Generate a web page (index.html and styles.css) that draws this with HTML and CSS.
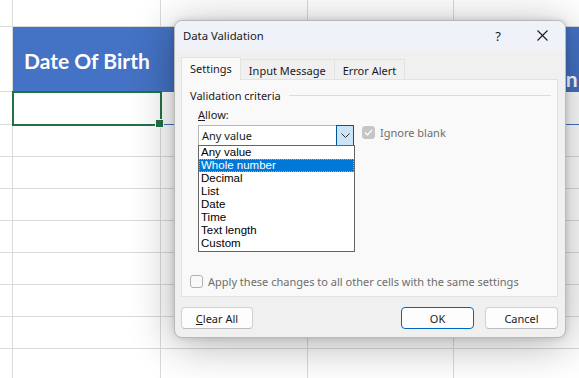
FILE: index.html
```html
<!DOCTYPE html>
<html lang="en">
<head>
  <meta charset="UTF-8" />
  <title>Data Validation</title>
  <link rel="stylesheet" href="styles.css">
</head>
<body>
  <!-- worksheet behind the dialog -->
  <div class="sheet">
    <div class="cell"></div><div class="cell"></div><div class="cell"></div><div class="cell"></div><div class="cell"></div>

    <div class="cell"></div>
    <div class="cell head">Date Of Birth</div>
    <div class="cell head"></div>
    <div class="cell head"></div>
    <div class="cell head end">Designation</div>

    <div class="cell"></div>
    <div class="cell sel"></div>
    <div class="cell band"></div><div class="cell band"></div><div class="cell band"></div>

    <div class="cell"></div><div class="cell"></div><div class="cell"></div><div class="cell"></div><div class="cell"></div>
    <div class="cell"></div><div class="cell"></div><div class="cell"></div><div class="cell"></div><div class="cell"></div>
    <div class="cell"></div><div class="cell"></div><div class="cell"></div><div class="cell"></div><div class="cell"></div>
    <div class="cell"></div><div class="cell"></div><div class="cell"></div><div class="cell"></div><div class="cell"></div>
    <div class="cell"></div><div class="cell"></div><div class="cell"></div><div class="cell"></div><div class="cell"></div>
    <div class="cell"></div><div class="cell"></div><div class="cell"></div><div class="cell"></div><div class="cell"></div>
    <div class="cell"></div><div class="cell"></div><div class="cell"></div><div class="cell"></div><div class="cell"></div>
    <div class="cell"></div><div class="cell"></div><div class="cell"></div><div class="cell"></div><div class="cell"></div>
  </div>

  <div class="dialog">
    <div class="titlebar">
      <span class="title">Data Validation</span>
      <span class="help">?</span>
      <svg class="close" width="11" height="11" viewBox="0 0 11 11">
        <path d="M0.5 0.5 L10.5 10.5 M10.5 0.5 L0.5 10.5" stroke="#1a1a1a" stroke-width="1.1" fill="none"/>
      </svg>
    </div>

    <div class="body">
      <div class="tabs">
        <div class="tab active">Settings</div>
        <div class="tab">Input Message</div>
        <div class="tab">Error Alert</div>
      </div>

      <div class="panel">
        <div class="group-label">
          <span>Validation criteria</span>
          <span class="rule"></span>
        </div>

        <div class="allow">
          <div class="field-label"><u>A</u>llow:</div>
          <div class="allow-row">
            <div class="combo-wrap">
              <div class="combo">
                <span class="combo-text">Any value</span>
                <span class="combo-btn">
                  <svg width="9" height="6" viewBox="0 0 9 6">
                    <path d="M0.5 0.5 L4.5 4.5 L8.5 0.5" stroke="#333" stroke-width="1" fill="none"/>
                  </svg>
                </span>
              </div>
              <ul class="droplist">
                <li>Any value</li>
                <li class="picked">Whole number</li>
                <li>Decimal</li>
                <li>List</li>
                <li>Date</li>
                <li>Time</li>
                <li>Text length</li>
                <li>Custom</li>
              </ul>
            </div>
            <label class="check disabled">
              <span class="box on">
                <svg width="9" height="7" viewBox="0 0 9 7">
                  <path d="M1 3.5 L3.5 6 L8 1" stroke="#fff" stroke-width="1.2" fill="none"/>
                </svg>
              </span>
              Ignore blank
            </label>
          </div>
        </div>

        <label class="check disabled apply">
          <span class="box"></span>
          Apply these changes to all other cells with the same settings
        </label>
      </div>

      <div class="buttons">
        <button class="btn"><u>C</u>lear All</button>
        <span class="spacer"></span>
        <button class="btn primary">OK</button>
        <button class="btn">Cancel</button>
      </div>
    </div>
  </div>
</body>
</html>
```
FILE: styles.css
```css
* {
  margin: 0;
  padding: 0;
  box-sizing: border-box;
}

body {
  width: 579px;
  height: 378px;
  overflow: hidden;
  background: #fff;
  position: relative;
  font-family: 'Noto Sans', 'Open Sans', sans-serif;
}

/* worksheet */
.sheet {
  display: grid;
  grid-template-columns: 13px 148px 147px 146px 1fr;
  grid-template-rows: 27px 65px 33px repeat(8, 32px);
}

.cell {
  border-right: 1px solid #dadada;
  border-bottom: 1px solid #dadada;
}

.cell.head {
  background: #4472c4;
  border-color: #4472c4;
  color: #fff;
  font-family: Lato, 'Open Sans', sans-serif;
  font-weight: 700;
  font-size: 21px;
  display: flex;
  align-items: center;
  padding-left: 11px;
  padding-top: 2px;
}

.cell.head.end {
  justify-content: flex-end;
  align-items: flex-end;
  padding-right: 9px;
  padding-bottom: 0;
}

.cell.band {
  border-bottom-color: #4472c4;
}

.cell.sel {
  position: relative;
  outline: 2px solid #217346;
  outline-offset: -1px;
}

.cell.sel::after {
  content: '';
  position: absolute;
  right: -4px;
  bottom: -4px;
  width: 7px;
  height: 7px;
  background: #217346;
  border: 1px solid #fff;
}

/* dialog */
.dialog {
  position: absolute;
  left: 174px;
  top: 20px;
  width: 392px;
  height: 318px;
  background: #f0f0f0;
  border: 1px solid #b9b9b9;
  border-radius: 8px;
  overflow: hidden;
  box-shadow: 0 6px 44px rgba(0, 0, 0, 0.32), 0 0 6px rgba(0, 0, 0, 0.14);
  font-size: 11px;
  color: #1a1a1a;
  display: flex;
  flex-direction: column;
}

.titlebar {
  height: 30px;
  background: #eff2f9;
  display: flex;
  align-items: center;
  padding-left: 8px;
  padding-right: 17px;
}

.title {
  flex: 1;
  font-size: 11.3px;
}

.help {
  font-size: 13px;
  margin-right: 36px;
}

.close {
  display: block;
}

.body {
  flex: 1;
  padding: 7px 7px 8px 6px;
  display: flex;
  flex-direction: column;
}

.tabs {
  display: flex;
  align-items: flex-end;
  height: 22px;
  position: relative;
  z-index: 1;
}

.tab {
  height: 20px;
  padding: 0 8px;
  border: 1px solid #e2e2e2;
  border-bottom: none;
  border-left: none;
  background: #f0f0f0;
  display: flex;
  align-items: center;
  padding-top: 1px;
}

.tab.active {
  height: 23px;
  margin-bottom: -1px;
  background: #f9f9f9;
  border-left: 1px solid #e2e2e2;
  padding-bottom: 2px;
}

.panel {
  height: 218px;
  background: #f9f9f9;
  border: 1px solid #e2e2e2;
  padding: 8px 6px 0 8px;
  display: flex;
  flex-direction: column;
}

.group-label {
  display: flex;
  align-items: center;
  gap: 8px;
  height: 14px;
}

.group-label .rule {
  flex: 1;
  height: 1px;
  background: #dcdcdc;
}

.allow {
  padding-left: 8px;
  margin-top: 5px;
}

.field-label {
  height: 15px;
}

.allow-row {
  display: flex;
  align-items: flex-start;
  gap: 8px;
  margin-top: 3px;
}

.combo-wrap {
  position: relative;
  width: 156px;
}

.combo {
  height: 21px;
  border: 1px solid #b5b5b5;
  background: #fff;
  display: flex;
  align-items: stretch;
}

.combo-text {
  flex: 1;
  padding-left: 3px;
  display: flex;
  align-items: center;
}

.combo-btn {
  width: 18px;
  margin: -1px -1px -1px 0;
  background: #cce4f7;
  border: 1px solid #005499;
  display: flex;
  align-items: center;
  justify-content: center;
}

.droplist {
  position: absolute;
  left: 0;
  top: 20px;
  width: 157px;
  list-style: none;
  background: #fff;
  border: 1px solid #646464;
  padding-bottom: 1px;
  z-index: 2;
}

.droplist li {
  height: 13px;
  line-height: 13px;
  padding-left: 2px;
  color: #000;
  font-family: 'Liberation Sans', Arial, sans-serif;
  font-size: 11.5px;
}

.droplist li.picked {
  background: #0078d7;
  color: #fff;
  outline: 1px dotted #f29a3a;
  outline-offset: -1px;
}

.check {
  display: flex;
  align-items: center;
  gap: 5px;
  color: #6d6d6d;
}

.box {
  width: 13px;
  height: 13px;
  border-radius: 3px;
  border: 1px solid #b0b0b0;
  background: #f9f9f9;
  display: flex;
  align-items: center;
  justify-content: center;
}

.box.on {
  background: #c6c6c6;
  border-color: #c6c6c6;
}

.apply {
  margin-top: auto;
  margin-bottom: 7px;
}

.buttons {
  display: flex;
  gap: 11px;
  margin-top: 10px;
}

.spacer {
  flex: 1;
}

.btn {
  width: 73px;
  height: 22px;
  background: #fdfdfd;
  border: 1px solid #d0d0d0;
  border-bottom-color: #bdbdbd;
  border-radius: 4px;
  font-family: inherit;
  font-size: 11px;
  color: #1a1a1a;
}

.btn:first-child {
  width: 72px;
}

.btn.primary {
  border: 1px solid #0067c0;
}
```
